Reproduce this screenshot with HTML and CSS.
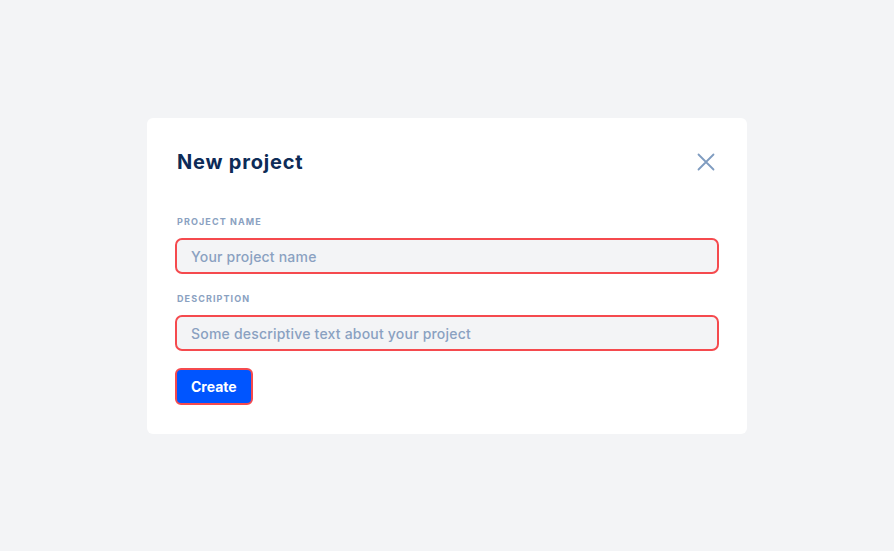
FILE: index.html
```html
<!DOCTYPE html>
<html lang="en">
<head>
<meta charset="utf-8">
<title>New project</title>
<link rel="stylesheet" href="styles.css">
</head>
<body>
<div class="page">
  <div class="card">
    <div class="header">
      <h1 class="title">New project</h1>
      <button class="close" aria-label="Close">
        <svg width="18" height="18" viewBox="0 0 18 18" fill="none"><path d="M1.5 1.5L16.5 16.5M16.5 1.5L1.5 16.5" stroke="#7f9cc0" stroke-width="1.8" stroke-linecap="round"/></svg>
      </button>
    </div>
    <div class="field first">
      <label class="label">PROJECT NAME</label>
      <input class="input" type="text" placeholder="Your project name">
    </div>
    <div class="field">
      <label class="label">DESCRIPTION</label>
      <input class="input" type="text" placeholder="Some descriptive text about your project">
    </div>
    <div class="actions">
      <button class="btn">Create</button>
    </div>
  </div>
</div>
</body>
</html>
```

FILE: styles.css
```css
* { box-sizing: border-box; }
html, body { margin: 0; padding: 0; }
body {
  background: #f3f4f6;
  font-family: Inter, "Noto Sans", sans-serif;
  width: 894px;
  height: 551px;
}
.page {
  display: flex;
  justify-content: center;
  padding-top: 118px;
}
.card {
  width: 600px;
  background: #ffffff;
  border-radius: 6px;
  padding: 28px 28px 29px 28px;
}
.header {
  display: flex;
  align-items: center;
  justify-content: space-between;
  height: 32px;
  padding-left: 2px;
}
.title {
  margin: 0;
  font-size: 20px;
  font-weight: 700;
  color: #0d2b57;
  letter-spacing: 0.8px;
}
.close {
  background: none;
  border: none;
  padding: 0;
  margin-right: 4px;
  width: 18px;
  height: 18px;
  display: flex;
  cursor: pointer;
}
.field {
  display: flex;
  flex-direction: column;
  margin-top: 17px;
}
.field.first { margin-top: 36px; }
.label {
  font-size: 9px;
  line-height: 16px;
  font-weight: 700;
  color: #8aa1c1;
  letter-spacing: 1.1px;
  margin-bottom: 8px;
  padding-left: 2px;
}
.input {
  height: 36px;
  width: 544px;
  border: 2px solid #f54a4e;
  border-radius: 7px;
  background: #f3f4f6;
  padding: 0 14px;
  font-family: inherit;
  font-size: 14px;
  font-weight: 500;
  letter-spacing: 0.2px;
  color: #0d2b57;
  outline: none;
}
.input::placeholder { color: #8aa1c1; opacity: 1; }
.actions {
  display: flex;
  margin-top: 17px;
}
.btn {
  height: 37px;
  padding: 0 14px;
  background: #0055ff;
  color: #ffffff;
  border: 2px solid #f54a4e;
  border-radius: 6px;
  font-family: inherit;
  font-size: 14px;
  font-weight: 700;
  cursor: pointer;
}
```
